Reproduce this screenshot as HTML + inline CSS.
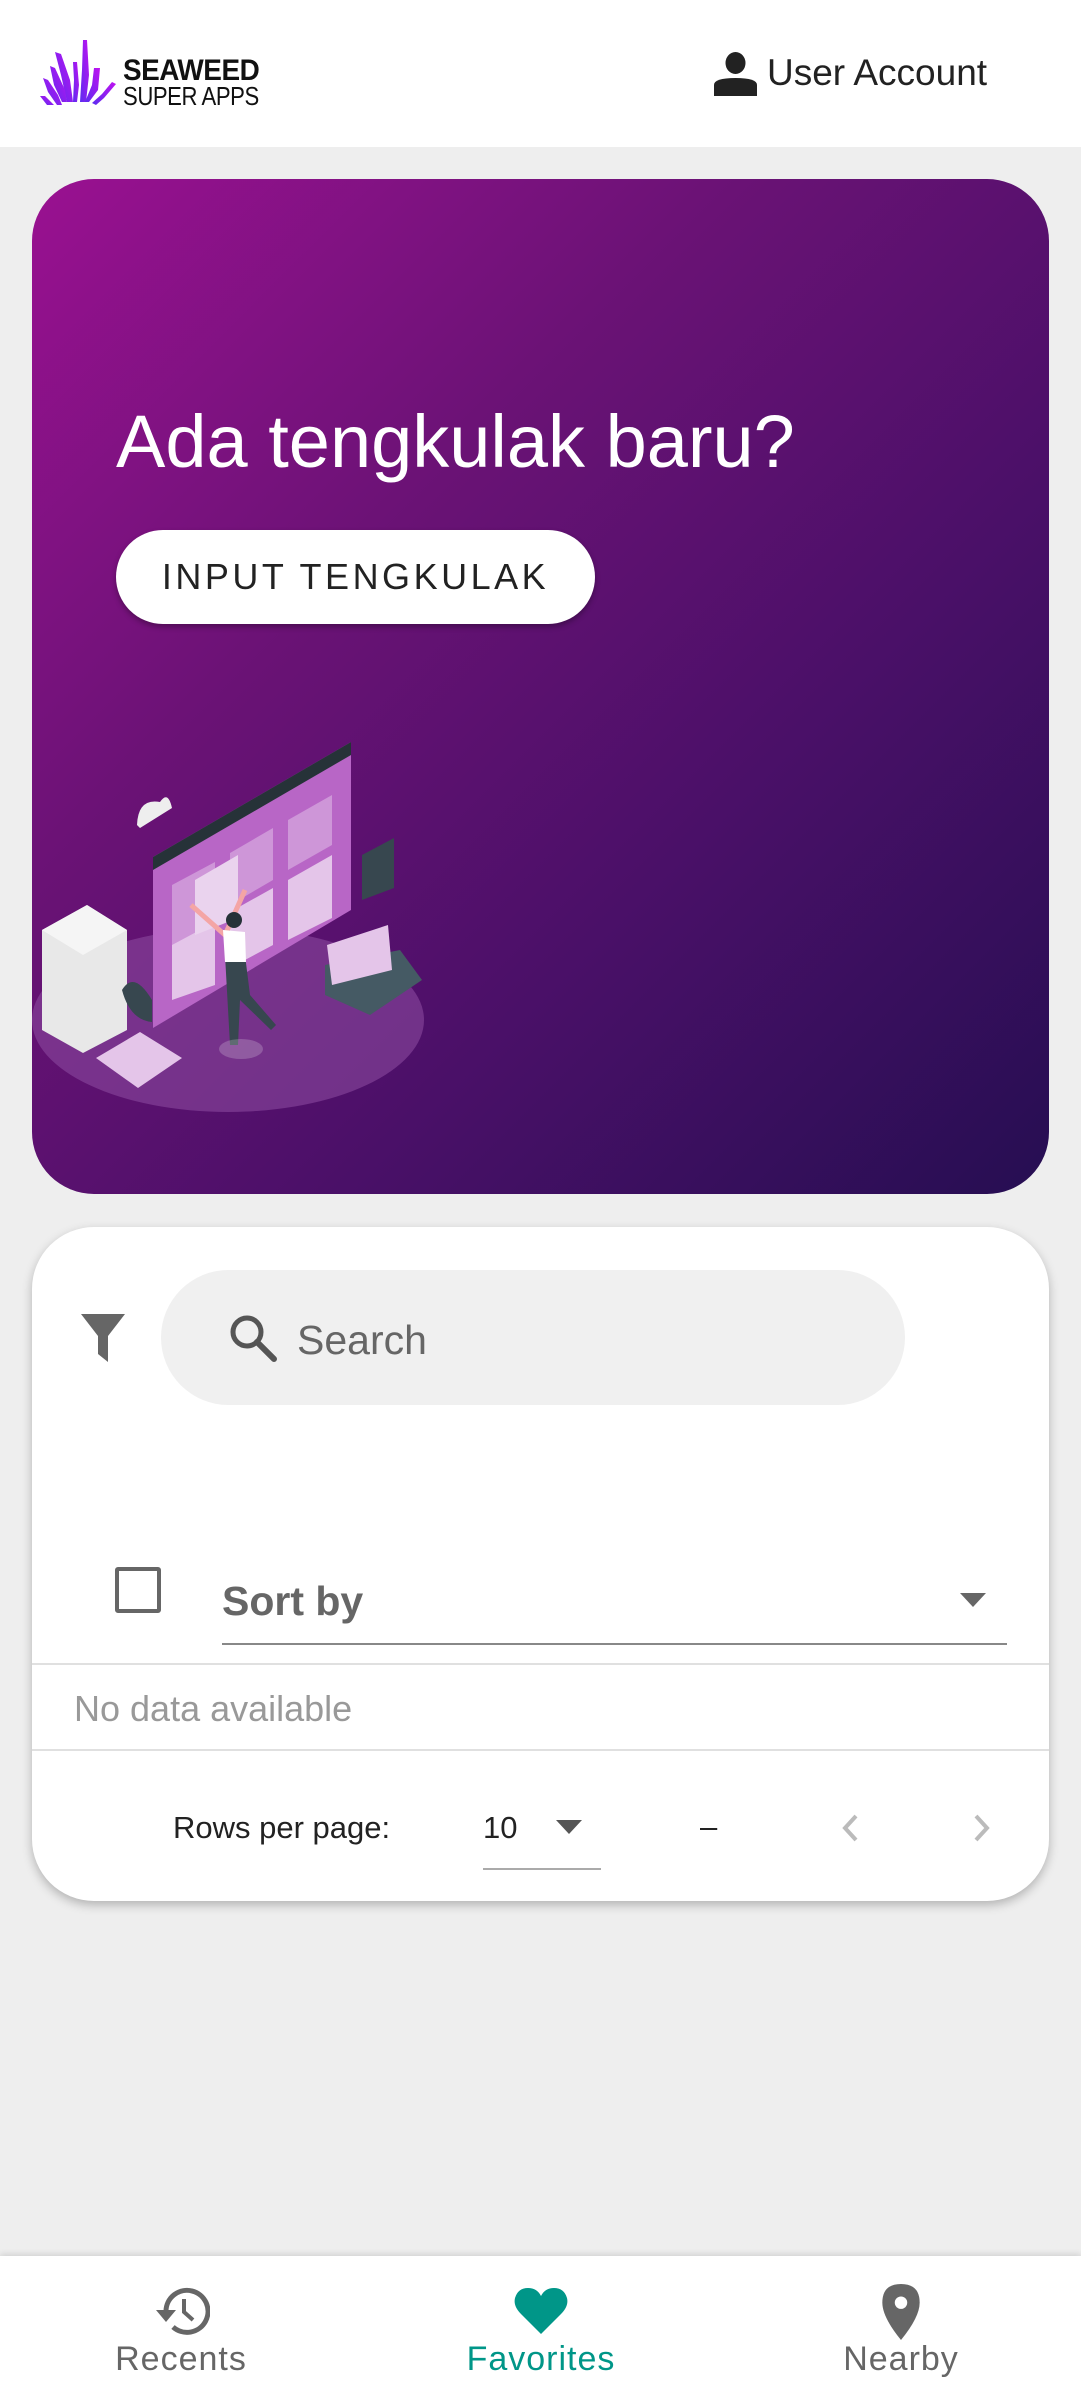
<!DOCTYPE html>
<html><head><meta charset="utf-8"><style>
*{margin:0;padding:0;box-sizing:border-box}
body{width:1081px;height:2404px;background:#eeeeee;font-family:"Liberation Sans",sans-serif;position:relative;overflow:hidden}
.abs{position:absolute}
header{position:absolute;left:0;top:0;width:1081px;height:147px;background:#fff}
.hero{left:32px;top:179px;width:1017px;height:1015px;border-radius:62px;background:linear-gradient(135deg,#9a1191 0%,#6a1275 35%,#4a1068 65%,#260e52 100%);overflow:hidden}
.card{left:32px;top:1227px;width:1017px;height:674px;border-radius:62px;background:#fff;box-shadow:0 4px 10px rgba(0,0,0,.25)}
nav{position:absolute;left:0;top:2256px;width:1081px;height:148px;background:#fff;box-shadow:0 -2px 6px rgba(0,0,0,.12)}
.lbl{position:absolute;top:84px;font-size:34px;letter-spacing:1px;color:#666;transform:translateX(-50%);white-space:nowrap}
</style></head><body>
<header>
<svg class="abs" style="left:40px;top:40px" width="76" height="66" viewBox="0 0 76 66">
<defs><linearGradient id="lg" x1="0" y1="1" x2="1" y2="0"><stop offset="0" stop-color="#5b2cf0"/><stop offset="1" stop-color="#c012f0"/></linearGradient></defs>
<g fill="url(#lg)">
<path d="M43 0 L47 0 L49 35 L46 62 L40 62 L42 30Z"/>
<path d="M15 12 L21 14 L30 40 L33 62 L27 62 L21 35Z"/>
<path d="M54 28 L60 28 L58 50 L49 62 L45 62 L52 45Z"/>
<path d="M3 38 L8 40 L18 55 L22 65 L17 65 L8 52Z"/>
<path d="M72 42 L76 44 L64 58 L56 65 L52 63 L62 54Z"/>
<path d="M0 56 L5 56 L14 65 L7 65Z"/>
<path d="M10 26 L15 28 L25 50 L27 62 L22 62 L14 45Z"/>
<path d="M33 22 L37 22 L39 45 L37 62 L33 62 L34 40Z"/>
</g></svg>
<div class="abs" style="left:123px;top:56px;font-size:30px;font-weight:bold;color:#111;letter-spacing:-0.5px;line-height:30px;transform:scaleX(.93);transform-origin:left;white-space:nowrap">SEAWEED</div>
<div class="abs" style="left:123px;top:83px;font-size:26px;color:#111;line-height:26px;letter-spacing:-0.5px;transform:scaleX(.85);transform-origin:left;white-space:nowrap">SUPER APPS</div>
<svg class="abs" style="left:714px;top:52px" width="43" height="44" viewBox="0 0 43 44"><ellipse cx="21.5" cy="11" rx="10" ry="11" fill="#222"/><path d="M0 44 V33 Q0 26 21.5 26 Q43 26 43 33 V44Z" fill="#222"/></svg>
<div class="abs" style="left:767px;top:52px;font-size:37px;color:#222;white-space:nowrap">User Account</div>
</header>

<div class="abs hero">
<div class="abs" style="left:84px;top:220px;font-size:74px;color:#fff;white-space:nowrap">Ada tengkulak baru?</div>
<div class="abs" style="left:84px;top:351px;width:479px;height:94px;border-radius:47px;background:#fff;box-shadow:0 3px 6px rgba(0,0,0,.3);font-size:36px;letter-spacing:3.5px;color:#222;text-align:center;line-height:94px">INPUT TENGKULAK</div>
<svg class="abs" style="left:-32px;top:521px" width="540" height="480" viewBox="0 700 540 480">
<ellipse cx="228" cy="1020" rx="196" ry="92" fill="#8a4a9e" opacity=".6"/>
<path d="M137 825 Q138 798 160 802 Q168 790 172 808 L140 828Z" fill="#eee"/>
<path d="M153 857 L351 742 L351 910 L153 1028Z" fill="#b866c6"/>
<path d="M153 857 L351 742 L351 755 L153 870Z" fill="#263238"/>
<path d="M172 885 L215 862 L215 928 L172 950Z" fill="#e4c5e9" opacity=".5"/>
<path d="M230 853 L273 828 L273 880 L230 905Z" fill="#e4c5e9" opacity=".5"/>
<path d="M288 820 L332 795 L332 845 L288 870Z" fill="#e4c5e9" opacity=".5"/>
<path d="M288 880 L332 855 L332 918 L288 940Z" fill="#e4c5e9"/>
<path d="M230 912 L273 888 L273 945 L230 968Z" fill="#e4c5e9"/>
<path d="M172 945 L215 922 L215 985 L172 1000Z" fill="#e4c5e9"/>
<path d="M195 880 L238 855 L238 918 L195 935Z" fill="#ead3ee"/>
<path d="M191 905 L225 935 L245 890" fill="none" stroke="#f4a5a5" stroke-width="5"/>
<path d="M225 955 L245 955 L250 995 L276 1025 L271 1030 L240 1000 L238 1045 L230 1045Z" fill="#37474f"/>
<path d="M223 930 L245 932 L246 962 L225 962Z" fill="#fff"/>
<circle cx="234" cy="920" r="8" fill="#263238"/>
<path d="M362 855 L394 838 L394 888 L362 900Z" fill="#37474f"/>
<path d="M42 930 L87 905 L127 930 L127 1030 L83 1053 L42 1030Z" fill="#e8e8e8"/>
<path d="M42 930 L87 905 L127 930 L83 955Z" fill="#f5f5f5"/>
<path d="M325 965 L400 950 L422 980 L370 1015 L325 995Z" fill="#455a64"/>
<path d="M327 945 L388 925 L392 970 L332 985Z" fill="#e4c5e9"/>
<path d="M96 1058 L140 1032 L182 1058 L138 1088Z" fill="#e4c5e9"/>
<ellipse cx="241" cy="1049" rx="22" ry="10" fill="#fff" opacity=".2"/>
<path d="M122 990 Q134 970 152 1000 L152 1022 Q130 1020 122 990Z" fill="#37474f"/>
</svg>
</div>

<div class="abs card">
<svg class="abs" style="left:49px;top:87px" width="44" height="48" viewBox="0 0 44 48"><path d="M0 0 H44 L27 22 V48 L17 40 V22Z" fill="#666"/></svg>
<div class="abs" style="left:129px;top:43px;width:744px;height:135px;border-radius:68px;background:#f0f0f0"></div>
<svg class="abs" style="left:196px;top:86px" width="50" height="50" viewBox="0 0 50 50"><circle cx="19" cy="19" r="14" fill="none" stroke="#555" stroke-width="5"/><path d="M29 29 L46 46" stroke="#555" stroke-width="6" stroke-linecap="round"/></svg>
<div class="abs" style="left:265px;top:90px;font-size:41px;color:#666">Search</div>
<div class="abs" style="left:83px;top:340px;width:46px;height:46px;border:4px solid #666;border-radius:3px"></div>
<div class="abs" style="left:190px;top:351px;font-size:41px;font-weight:bold;color:#666">Sort by</div>
<svg class="abs" style="left:928px;top:366px" width="26" height="14"><path d="M0 0 H26 L13 14Z" fill="#666"/></svg>
<div class="abs" style="left:190px;top:416px;width:785px;height:2px;background:#888"></div>
<div class="abs" style="left:0;top:436px;width:1017px;height:2px;background:#e0e0e0"></div>
<div class="abs" style="left:42px;top:461px;font-size:36px;color:#999">No data available</div>
<div class="abs" style="left:0;top:522px;width:1017px;height:2px;background:#e0e0e0"></div>
<div class="abs" style="left:141px;top:583px;font-size:31px;color:#222">Rows per page:</div>
<div class="abs" style="left:451px;top:583px;font-size:31px;color:#222">10</div>
<svg class="abs" style="left:524px;top:593px" width="26" height="14"><path d="M0 0 H26 L13 14Z" fill="#555"/></svg>
<div class="abs" style="left:451px;top:641px;width:118px;height:2px;background:#aaa"></div>
<div class="abs" style="left:668px;top:582px;font-size:31px;color:#222">–</div>
<svg class="abs" style="left:808px;top:586px" width="20" height="30"><path d="M16 3 L5 15 L16 27" fill="none" stroke="#bbb" stroke-width="4"/></svg>
<svg class="abs" style="left:940px;top:586px" width="20" height="30"><path d="M4 3 L15 15 L4 27" fill="none" stroke="#bbb" stroke-width="4"/></svg>
</div>

<nav>
<svg class="abs" style="left:150px;top:30px" width="60" height="50" viewBox="0 0 60 50"><path d="M16 25 A21 21 0 1 1 23 41" fill="none" stroke="#666" stroke-width="5"/><path d="M6 24 H26 L16 36Z" fill="#666"/><path d="M34 13 V26 L43 34" fill="none" stroke="#666" stroke-width="4"/></svg>
<div class="lbl" style="left:181px">Recents</div>
<svg class="abs" style="left:513px;top:30px" width="56" height="50" viewBox="0 0 56 50"><path d="M28 48 L8 28 Q0 20 2 12 Q5 2 15 2 Q24 2 28 10 Q32 2 41 2 Q51 2 54 12 Q56 20 48 28Z" fill="#009688"/></svg>
<div class="lbl" style="left:541px;color:#009688">Favorites</div>
<svg class="abs" style="left:882px;top:28px" width="38" height="56" viewBox="0 0 36 54"><path d="M18 0 Q36 0 36 18 Q36 32 18 54 Q0 32 0 18 Q0 0 18 0Z" fill="#666"/><circle cx="18" cy="18" r="6" fill="#fff"/></svg>
<div class="lbl" style="left:901px">Nearby</div>
</nav>
</body></html>
